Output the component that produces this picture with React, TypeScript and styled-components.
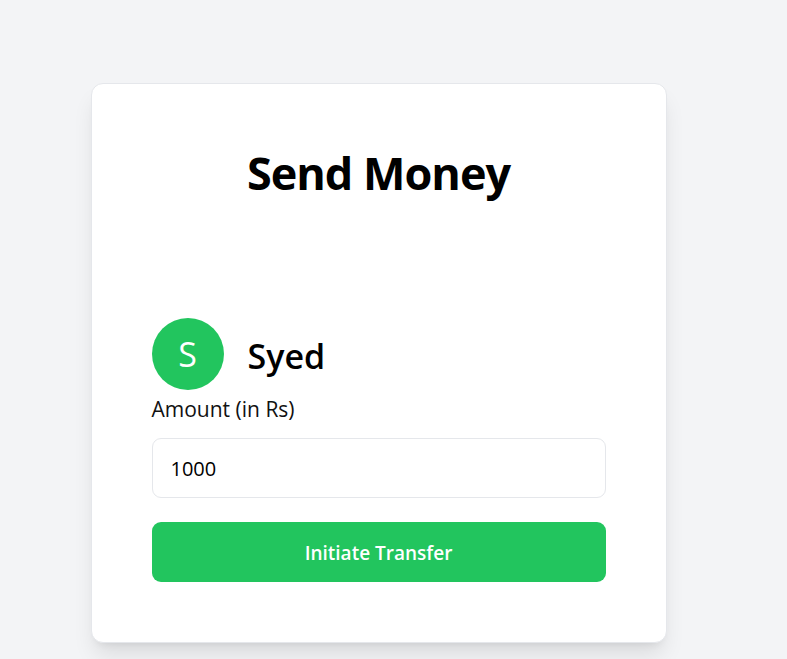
import React from "react";
import styled, { createGlobalStyle } from "styled-components";

const Global = createGlobalStyle`
  html, body { margin: 0; padding: 0; }
  body {
    background: #f3f4f6;
    font-family: "Open Sans", "Noto Sans", "Liberation Sans", sans-serif;
    color: #000;
  }
  * { box-sizing: border-box; }
`;

const Page = styled.div`
  display: flex;
  justify-content: center;
  align-items: flex-start;
  min-height: 659px;
  padding: 83px 30px 0 0;
  background: #f3f4f6;
`;

const Card = styled.div`
  width: 576px;
  background: #ffffff;
  border: 1px solid #e5e7eb;
  border-radius: 12px;
  padding: 24px;
  box-shadow: 0 15px 22px -4px rgba(0, 0, 0, 0.1),
    0 6px 9px -6px rgba(0, 0, 0, 0.1);
  display: flex;
  flex-direction: column;
  gap: 48px;
`;

const Header = styled.div`
  padding: 36px;
`;

const Title = styled.h2`
  margin: 0;
  padding-top: 3px;
  font-size: 45px;
  line-height: 51px;
  font-weight: 700;
  text-align: center;
  letter-spacing: -1px;
`;

const Body = styled.div`
  padding: 36px;
`;

const Recipient = styled.div`
  display: flex;
  align-items: center;
  gap: 24px;
`;

const Avatar = styled.div`
  width: 72px;
  height: 72px;
  border-radius: 50%;
  background: #22c55e;
  display: flex;
  align-items: center;
  justify-content: center;
  color: #ffffff;
  font-size: 34px;
  line-height: 48px;
`;

const Name = styled.h3`
  margin: 0;
  padding-top: 4px;
  font-size: 34px;
  line-height: 44px;
  font-weight: 600;
`;

const Form = styled.div`
  display: flex;
  flex-direction: column;
  gap: 24px;
`;

const Field = styled.div`
  display: flex;
  flex-direction: column;
  gap: 12px;
`;

const LabelRow = styled.div`
  height: 36px;
  padding-top: 3px;
  display: flex;
  align-items: center;
`;

const Label = styled.label`
  font-size: 21px;
  font-weight: 500;
  line-height: 21px;
  color: #111;
`;

const Input = styled.input`
  height: 60px;
  width: 100%;
  border: 1px solid #e5e7eb;
  border-radius: 9px;
  padding: 0 18px;
  font-family: inherit;
  font-size: 20px;
  color: #000;
  background: #fff;
  outline: none;
`;

const Button = styled.button`
  height: 60px;
  width: 100%;
  border: none;
  border-radius: 9px;
  background: #22c55e;
  color: #ffffff;
  font-family: inherit;
  font-size: 19px;
  font-weight: 600;
  padding-top: 2px;
  cursor: pointer;
`;

export default function App() {
  return (
    <>
      <Global />
      <Page>
        <Card>
          <Header>
            <Title>Send Money</Title>
          </Header>
          <Body>
            <Recipient>
              <Avatar>S</Avatar>
              <Name>Syed</Name>
            </Recipient>
            <Form>
              <Field>
                <LabelRow>
                  <Label htmlFor="amount">Amount (in Rs)</Label>
                </LabelRow>
                <Input id="amount" type="text" defaultValue="1000" />
              </Field>
              <Button>Initiate Transfer</Button>
            </Form>
          </Body>
        </Card>
      </Page>
    </>
  );
}
